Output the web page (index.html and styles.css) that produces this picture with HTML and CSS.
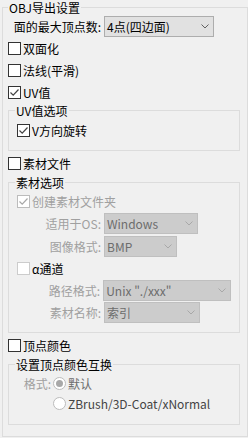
FILE: index.html
```html
<!DOCTYPE html>
<html lang="zh-CN">
<head>
    <meta charset="UTF-8">
    <title>OBJ导出设置</title>
    <link rel="stylesheet" href="styles.css">
</head>
<body>
    <fieldset class="group outer">
        <legend>OBJ导出设置</legend>

        <div class="field top-field">
            <span class="label wide">面的最大顶点数:</span>
            <div class="select w110">
                <span>4点(四边面)</span>
                <svg class="chev" width="8" height="5" viewBox="0 0 8 5"><path d="M0.5 0.5 L4 4 L7.5 0.5"/></svg>
            </div>
        </div>

        <div class="check"><span class="box"></span>双面化</div>
        <div class="check"><span class="box"></span>法线(平滑)</div>
        <div class="check"><span class="box on"><svg width="11" height="11" viewBox="0 0 11 11"><path d="M1.5 5.5 L4.2 8.2 L9.5 2.5"/></svg></span>UV值</div>

        <fieldset class="group inner uv-group">
            <legend>UV值选项</legend>
            <div class="check first"><span class="box on"><svg width="11" height="11" viewBox="0 0 11 11"><path d="M1.5 5.5 L4.2 8.2 L9.5 2.5"/></svg></span>V方向旋转</div>
        </fieldset>

        <div class="check after-group"><span class="box"></span>素材文件</div>

        <fieldset class="group inner tex-group">
            <legend>素材选项</legend>
            <div class="check first disabled"><span class="box on"><svg width="11" height="11" viewBox="0 0 11 11"><path d="M1.5 5.5 L4.2 8.2 L9.5 2.5"/></svg></span>创建素材文件夹</div>

            <div class="field os-field">
                <span class="label">适用于OS:</span>
                <div class="select off w94">
                    <span>Windows</span>
                    <svg class="chev" width="8" height="5" viewBox="0 0 8 5"><path d="M0.5 0.5 L4 4 L7.5 0.5"/></svg>
                </div>
            </div>
            <div class="field img-field">
                <span class="label">图像格式:</span>
                <div class="select off w73">
                    <span>BMP</span>
                    <svg class="chev" width="8" height="5" viewBox="0 0 8 5"><path d="M0.5 0.5 L4 4 L7.5 0.5"/></svg>
                </div>
            </div>

            <div class="check alpha"><span class="box light"></span>α通道</div>

            <div class="field path-field">
                <span class="label">路径格式:</span>
                <div class="select off w129">
                    <span>Unix "./xxx"</span>
                    <svg class="chev" width="8" height="5" viewBox="0 0 8 5"><path d="M0.5 0.5 L4 4 L7.5 0.5"/></svg>
                </div>
            </div>
            <div class="field name-field">
                <span class="label">素材名称:</span>
                <div class="select off w96">
                    <span>索引</span>
                    <svg class="chev" width="8" height="5" viewBox="0 0 8 5"><path d="M0.5 0.5 L4 4 L7.5 0.5"/></svg>
                </div>
            </div>
        </fieldset>

        <div class="check after-group"><span class="box"></span>顶点颜色</div>

        <fieldset class="group inner color-group">
            <legend>设置顶点颜色互换</legend>
            <div class="radio-row first">
                <span class="radio-label">格式:</span>
                <span class="radio on"></span>
                <span class="radio-text dim">默认</span>
            </div>
            <div class="radio-row">
                <span class="radio-label"></span>
                <span class="radio"></span>
                <span class="radio-text">ZBrush/3D-Coat/xNormal</span>
            </div>
        </fieldset>
    </fieldset>
</body>
</html>
```

FILE: styles.css
```css
body {
    margin: 0;
    padding: 0;
    background: #f0f0f0;
    font-family: "Noto Sans CJK SC", "Microsoft YaHei", sans-serif;
    font-size: 12px;
    color: #000;
}
.group {
    box-sizing: border-box;
    margin: 0;
    min-inline-size: 0;
    border: 1px solid #dcdcdc;
}
.group legend {
    padding: 0 1px;
    line-height: 13px;
}
.outer {
    width: 246px;
    margin-left: 2px;
    padding: 0 7px 11px 5px;
}
.outer > legend {
    padding-top: 1px;
}
.inner {
    padding: 0 8px 9px 8px;
}
.inner legend {
    margin-left: -2px;
}
.uv-group {
    margin-top: 1px;
}
.tex-group,
.color-group {
    margin-top: 2px;
}
.color-group {
    padding-bottom: 11px;
}
.check {
    display: flex;
    align-items: center;
    height: 22px;
    white-space: nowrap;
}
.check.first {
    margin-top: 2px;
}
.tex-group .check.first {
    margin-top: 1px;
}
.after-group {
    margin-top: 1px;
}
.box {
    box-sizing: border-box;
    width: 13px;
    height: 13px;
    border: 1px solid #333;
    background: #fff;
    margin-right: 2px;
    display: flex;
    align-items: center;
    justify-content: center;
    flex-shrink: 0;
}
.box svg path {
    fill: none;
    stroke: #444;
    stroke-width: 1.2;
}
.box.light {
    border-color: #cccccc;
}
.disabled {
    color: #a0a0a0;
}
.disabled .box {
    border-color: #bcbcbc;
}
.disabled .box svg path {
    stroke: #a8a8a8;
}
.field {
    display: flex;
    align-items: center;
    height: 21px;
    white-space: nowrap;
}
.top-field {
    margin-top: 2px;
}
.os-field {
    margin-top: 1px;
}
.img-field {
    margin-top: 2px;
}
.path-field,
.name-field {
    margin-top: 1px;
}
.label {
    box-sizing: border-box;
    width: 87px;
    padding-right: 3px;
    text-align: right;
    color: #a0a0a0;
}
.label.wide {
    width: 96px;
    color: #000;
}
.select {
    box-sizing: border-box;
    height: 21px;
    border: 1px solid #adadad;
    background: #e1e1e1;
    padding-left: 2px;
    display: flex;
    align-items: center;
    justify-content: space-between;
}
.select .chev {
    margin-right: 4px;
}
.chev path {
    fill: none;
    stroke: #606060;
    stroke-width: 1;
}
.select.off {
    border-color: #bfbfbf;
    background: #cccccc;
    color: #6d6d6d;
}
.select.off .chev path {
    stroke: #a8a8a8;
}
.w110 { width: 110px; }
.w94 { width: 94px; }
.w73 { width: 73px; }
.w129 { width: 129px; }
.w96 { width: 96px; }
.radio-row {
    display: flex;
    align-items: center;
    height: 20px;
    white-space: nowrap;
}
.radio-row.first {
    margin-top: 2px;
}
.radio-label {
    box-sizing: border-box;
    width: 36px;
    padding-right: 2px;
    text-align: right;
    color: #a0a0a0;
}
.radio {
    box-sizing: border-box;
    width: 13px;
    height: 13px;
    border: 1px solid #bcbcbc;
    border-radius: 50%;
    background: #fff;
    margin-right: 2px;
    display: flex;
    align-items: center;
    justify-content: center;
}
.radio.on::after {
    content: "";
    width: 7px;
    height: 7px;
    border-radius: 50%;
    background: #a8a8a8;
}
.radio-text {
    color: #444;
}
.radio-text.dim {
    color: #6d6d6d;
}
```
